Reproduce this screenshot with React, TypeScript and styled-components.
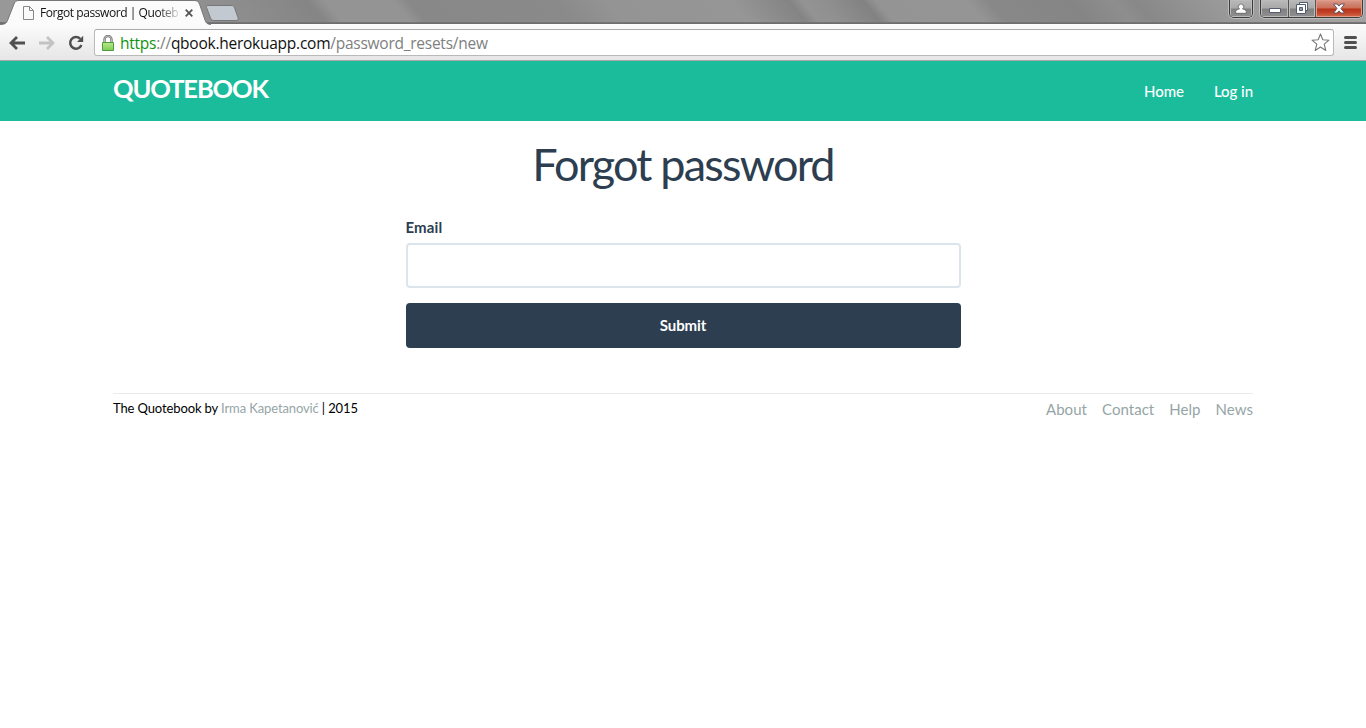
import React from 'react';
import styled, { createGlobalStyle } from 'styled-components';

const GlobalStyle = createGlobalStyle`
  *, *::before, *::after { box-sizing: border-box; }
  html, body { margin: 0; height: 100%; background: #fff; overflow: hidden; }
  body { font: 15px/1.42857 Lato, "Liberation Sans", sans-serif; color: #2c3e50; }
  a { text-decoration: none; }
`;

const chromeFont = '"Open Sans", "Noto Sans", sans-serif';

const TabStrip = styled.div`
  display: flex;
  position: relative;
  height: 25px;
  border-bottom: 1px solid #fdfdfd;
  background:
    linear-gradient(180deg, transparent 22px, #7b797a 22px, #6a6869 24px),
    linear-gradient(50deg, #999 0, #8f8f8f 180px, #858585 250px, #949494 264px, #949494 316px, #888 328px, #8a8a8a 440px, #949494 480px, #969696 575px, #848484 619px, #939393 629px, #909090 645px, #828282 676px, #949494 686px, #959595 755px, #888 772px, #858585 835px, #8e8e8e 868px, #888 884px, #9c9c9c 958px, #a2a2a2 1040px);
`;
const Tab = styled.div`
  position: relative;
  display: flex;
  align-items: center;
  width: 208px;
  height: 25px;
  padding: 1px 0 0 23px;
`;
const TabShape = styled.svg`
  position: absolute;
  left: 0;
  top: 0;
`;
const TabContent = styled.div`
  position: relative;
  display: flex;
  align-items: center;
`;
const TabTitle = styled.span`
  width: 139px;
  margin: 0 6px 0 6px;
  white-space: nowrap;
  font: 12px/16px ${chromeFont};
  letter-spacing: -0.44px;
  color: #111;
  mask-image: linear-gradient(90deg, #000 118px, transparent 142px);
`;
const NewTab = styled.svg`
  margin: 5px 0 0 -3px;
`;
const WindowControls = styled.div`
  display: flex;
  align-items: flex-start;
  margin-left: auto;
  padding-right: 3px;
`;
const ControlGroup = styled.div`
  display: flex;
  height: 18px;
  margin-left: 7px;
  border: 1px solid #3c3c3c;
  border-top: 0;
  border-radius: 0 0 5px 5px;
  box-shadow: 0 0 0 1px #bdbdbd;
  overflow: hidden;
`;
const Control = styled.button<{ $w: number; $danger?: boolean }>`
  display: flex;
  align-items: center;
  justify-content: center;
  width: ${p => p.$w}px;
  height: 17px;
  padding: 0 0 1px;
  border: 0;
  box-shadow: inset 0 0 0 1px ${p => (p.$danger ? '#e39b89' : '#bbb')};
  background: ${p => p.$danger
    ? 'linear-gradient(#d69a8b 0, #cb6e59 8px, #b83217 9px, #c2462c 13px, #da7555 18px)'
    : 'linear-gradient(#b9b9b9 0, #a9a9a9 8px, #808080 9px, #929292 18px)'};
  & + & { border-left: 1px solid #555; }
`;
const Toolbar = styled.div`
  display: flex;
  align-items: center;
  height: 36px;
  padding: 0 9px 0 9px;
  border-bottom: 1px solid #a9a9a9;
  background: linear-gradient(#fbfbfb, #e6e6e6);
`;
const NavIcons = styled.div`
  display: flex;
  align-items: center;
  gap: 13.5px;
  width: 85px;
`;
const AddressBar = styled.div`
  display: flex;
  align-items: center;
  flex: 1;
  height: 27px;
  padding: 0 3px 0 7px;
  border: 1px solid #b9b9b9;
  border-top-color: #a9a9a9;
  border-radius: 3px;
  background: #fff;
`;
const Url = styled.div`
  flex: 1;
  margin-left: 6px;
  font: 15.5px/24px ${chromeFont};
  letter-spacing: -0.25px;
  color: #808080;
`;
const Scheme = styled.span`color: #0f930f;`;
const Host = styled.span`color: #111;`;
const MenuButton = styled.svg`margin-left: 10px;`;

const Container = styled.div`
  width: 1140px;
  margin: 0 auto;
`;
const Header = styled.header`
  height: 60px;
  background: #1abc9c;
`;
const HeaderRow = styled(Container)`
  display: flex;
  justify-content: space-between;
`;
const Brand = styled.a`
  padding-top: 9px;
  color: #fff;
  font-size: 25.5px;
  font-weight: 700;
  letter-spacing: -1.12px;
  text-transform: uppercase;
`;
const HeaderNav = styled.nav`
  display: flex;
  gap: 30px;
  padding-top: 20px;
`;
const HeaderLink = styled.a`
  color: #fff;
  font-weight: 500;
  letter-spacing: -0.05px;
`;
const Title = styled.h1`
  margin: 19px 0 27px;
  font-size: 45px;
  font-weight: 400;
  line-height: 49.5px;
  letter-spacing: -1.8px;
  text-align: center;
`;
const Form = styled.form`
  display: flex;
  flex-direction: column;
  width: 555px;
  margin: 0 auto;
`;
const Label = styled.label`
  margin-bottom: 5px;
  font-weight: 700;
  letter-spacing: 0.15px;
`;
const Field = styled.input`
  height: 45px;
  margin-bottom: 15px;
  border: 2px solid #dce4ec;
  border-radius: 4px;
  outline: 0;
`;
const Submit = styled.button`
  height: 45px;
  border: 0;
  border-radius: 4px;
  background: #2c3e50;
  color: #fff;
  font: 700 15px/21px Lato, sans-serif;
  letter-spacing: -0.1px;
`;
const Footer = styled.footer`
  display: flex;
  justify-content: space-between;
  width: 1140px;
  margin: 45px auto 0;
  padding-top: 5px;
  border-top: 1px solid #eaeaea;
`;
const Credit = styled.small`
  font-size: 13px;
  line-height: 19px;
  letter-spacing: -0.12px;
  color: #000;
`;
const FooterLink = styled.a`color: #95a5a6;`;
const FooterNav = styled.nav`
  display: flex;
  gap: 15px;
  letter-spacing: 0.04px;
`;

const PageIcon = () => (
  <svg width="11" height="14" viewBox="0 0 11 14" fill="#fafafa" stroke="#888">
    <path d="M.5.5h6l4 4v9H.5zM6.5.5v4h4" />
  </svg>
);
const CloseIcon = () => (
  <svg width="8" height="8" viewBox="0 0 8 8" stroke="#555" strokeWidth="1.8">
    <path d="M.7.7l6.6 6.6M7.3.7L.7 7.3" />
  </svg>
);
const Arrow = ({ color, flip }: { color: string; flip?: boolean }) => (
  <svg width="16" height="14" viewBox="0 0 16 14" fill="none" stroke={color} strokeWidth="2.8">
    <path d={flip ? 'M0 7h14M8 1l6 6-6 6' : 'M16 7H2M8 1L2 7l6 6'} />
  </svg>
);
const Reload = () => (
  <svg width="16" height="16" viewBox="0 0 16 16">
    <path d="M12.2 3.9A5.8 5.8 0 1 0 13.4 10" fill="none" stroke="#505050" strokeWidth="2.5" />
    <path d="M15.2.8V7H9z" fill="#505050" />
  </svg>
);
const Lock = () => (
  <svg width="12" height="16" viewBox="0 0 12 16">
    <defs>
      <linearGradient id="lock" x2="0" y2="1"><stop stopColor="#b7ea88" /><stop offset="1" stopColor="#7ecb57" /></linearGradient>
    </defs>
    <path d="M2.5 8V4.5a3.5 3.5 0 0 1 7 0V8" fill="none" stroke="#777" strokeWidth="2.4" />
    <path d="M2.5 8V4.5a3.5 3.5 0 0 1 7 0V8" fill="none" stroke="#ccc" strokeWidth=".8" />
    <path d="M.5 7.5h11v8H.5z" fill="url(#lock)" stroke="#4f9b3c" />
  </svg>
);
const Star = () => (
  <svg width="19" height="19" viewBox="0 0 19 19" fill="#fff" stroke="#777" strokeWidth="1.1" strokeLinejoin="round">
    <path d="M9.5 1l2.3 5.8 6.2.4-4.8 4 1.6 6.3-5.3-3.5-5.3 3.5 1.6-6.3L1 7.2l6.2-.4z" />
  </svg>
);

const BrowserChrome = () => (
  <>
    <TabStrip>
      <Tab>
        <TabShape width="212" height="25" viewBox="0 0 212 25">
          <path d="M0 25V24.5H1C5 24.5 6.500 23 7.500 20.500L14 4C15 1.500 16 .5 19 .5H194C197 .5 198.500 1.500 199.500 4L205 20C206 23 207.500 24.500 211 24.500V25Z" fill="#fbfbfb" />
          <path d="M0 24.500H1C5 24.500 6.500 23 7.500 20.500L14 4C15 1.500 16 .5 19 .5H194C197 .5 198.500 1.500 199.500 4L205 20C206 23 207.500 24.500 211 24.500" fill="none" stroke="#777" />
        </TabShape>
        <TabContent>
          <PageIcon />
          <TabTitle>Forgot password | Quoteb</TabTitle>
          <CloseIcon />
        </TabContent>
      </Tab>
      <NewTab width="34" height="17" viewBox="0 0 34 17">
        <path d="M3 .5H26C28 .5 29 1 29.600 3L33 12.500C33.500 14.500 33 15.500 31 15.500H9C7 15.500 6 14.500 5.500 13L1.500 2.500C1 1 1.500.5 3 .5Z" fill="#c3c9d1" stroke="#777" />
      </NewTab>
      <WindowControls>
        <ControlGroup>
          <Control $w={22} aria-label="Profile">
            <svg width="12" height="11" viewBox="0 0 12 11" fill="#fff" stroke="#5c5c5c" strokeWidth=".8">
              <path d="M.7 10.300V8.500C.7 7 3 6.400 4.500 6A2.700 2.700 0 1 1 7.500 6C9 6.400 11.300 7 11.300 8.500v1.800z" />
            </svg>
          </Control>
        </ControlGroup>
        <ControlGroup>
          <Control $w={27} aria-label="Minimize">
            <svg width="12" height="12" viewBox="0 0 12 12" fill="#fff" stroke="#555b70"><path d="M.5 6.500h11v4H.5z" /></svg>
          </Control>
          <Control $w={27} aria-label="Restore">
            <svg width="12" height="12" viewBox="0 0 12 12" fill="#fff" stroke="#555b70">
              <path d="M3.500.5h8v8h-8z" /><path d="M.5 2.500h9v9h-9z" /><path d="M3.500 5.500h3v3h-3z" fill="#999" />
            </svg>
          </Control>
          <Control $w={47} $danger aria-label="Close">
            <svg width="12" height="11" viewBox="0 0 12 10" fill="#fff" stroke="#5a4a58" strokeWidth=".9">
              <path d="M.5.5h3.600L6 2.600 7.900.5h3.600L8 5l3.500 4.500H7.900L6 7.400 4.100 9.500H.5L4 5z" />
            </svg>
          </Control>
        </ControlGroup>
      </WindowControls>
    </TabStrip>
    <Toolbar>
      <NavIcons><Arrow color="#505050" /><Arrow color="#c3c3c3" flip /><Reload /></NavIcons>
      <AddressBar>
        <Lock />
        <Url><Scheme>https</Scheme>://<Host>qbook.herokuapp.com</Host>/password_resets/new</Url>
        <Star />
      </AddressBar>
      <MenuButton width="13" height="13" viewBox="0 0 13 13" stroke="#505050" strokeWidth="3" strokeLinecap="round">
        <path d="M1.500 1.500h10M1.500 6.500h10M1.500 11.500h10" />
      </MenuButton>
    </Toolbar>
  </>
);

export default function App() {
  return (
    <>
      <GlobalStyle />
      <BrowserChrome />
      <Header>
        <HeaderRow>
          <Brand>Quotebook</Brand>
          <HeaderNav><HeaderLink>Home</HeaderLink><HeaderLink>Log in</HeaderLink></HeaderNav>
        </HeaderRow>
      </Header>
      <main>
        <Title>Forgot password</Title>
        <Form>
          <Label htmlFor="email">Email</Label>
          <Field id="email" type="email" />
          <Submit type="button">Submit</Submit>
        </Form>
      </main>
      <Footer>
        <Credit>The Quotebook by <FooterLink>Irma Kapetanović</FooterLink> | 2015</Credit>
        <FooterNav>
          {['About', 'Contact', 'Help', 'News'].map(t => <FooterLink key={t}>{t}</FooterLink>)}
        </FooterNav>
      </Footer>
    </>
  );
}
